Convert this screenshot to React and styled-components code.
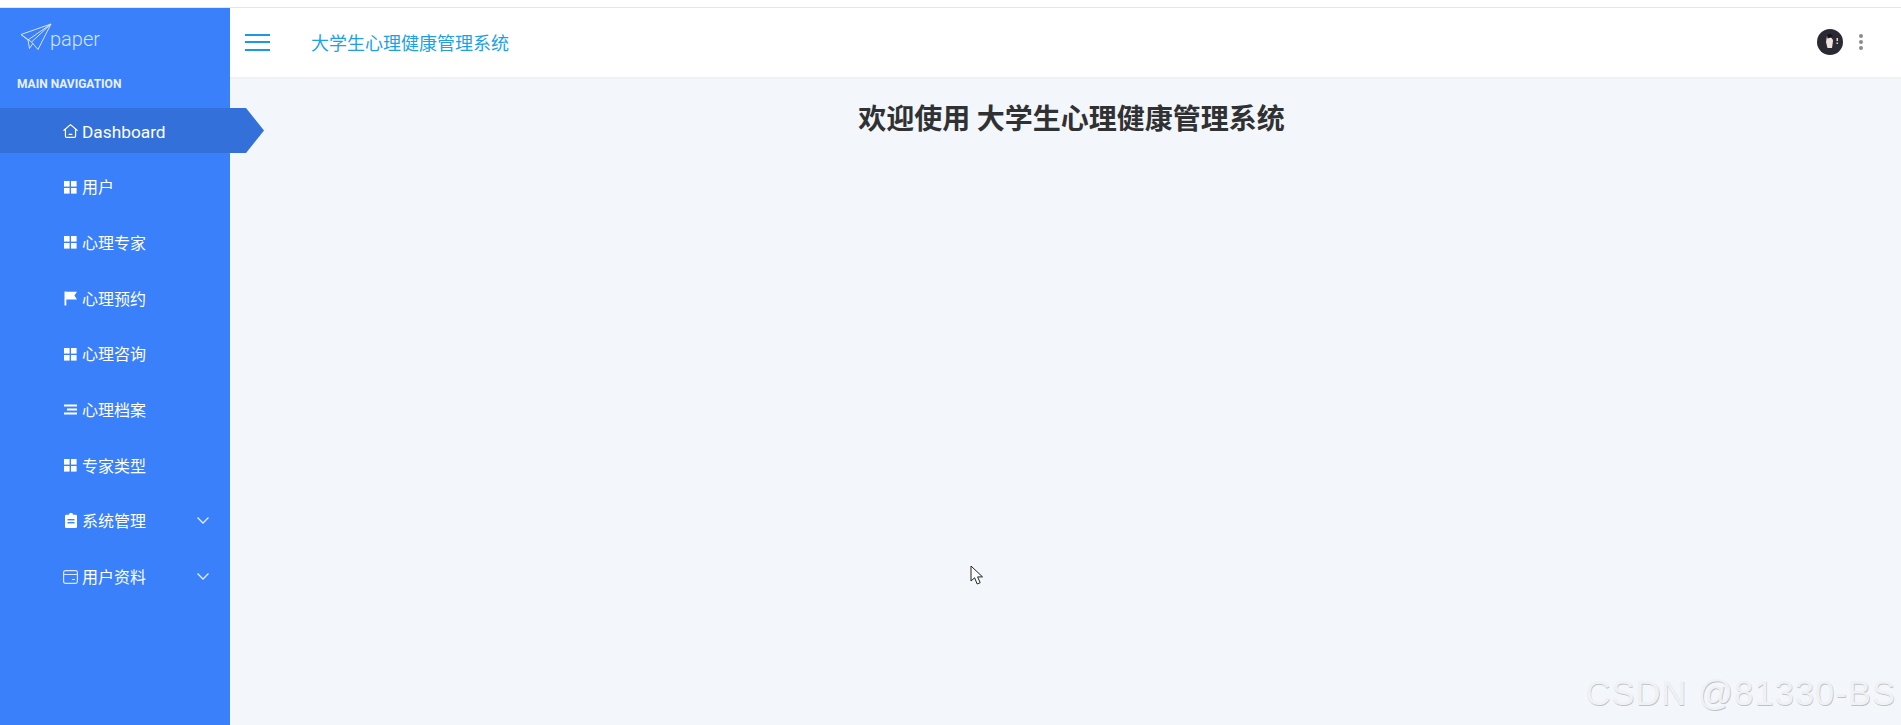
import React from "react";
import styled, { createGlobalStyle } from "styled-components";

const Global = createGlobalStyle`
  html, body { margin: 0; padding: 0; height: 100%; background: #f3f6fb; }
  #root { height: 100%; }
  * { box-sizing: border-box; }
`;

const Page = styled.div`
  position: relative;
  width: 1901px;
  height: 725px;
  display: flex;
  flex-direction: column;
  overflow: hidden;
  font-family: "Noto Sans", "Noto Sans CJK SC", sans-serif;
`;
const TopStrip = styled.div`
  height: 8px;
  flex: none;
  background: #fff;
  border-bottom: 1px solid #e4e6ea;
`;
const Body = styled.div`
  flex: 1;
  display: flex;
  min-height: 0;
`;
const Sidebar = styled.aside`
  width: 230px;
  flex: none;
  background: #3a80fb;
  display: flex;
  flex-direction: column;
  position: relative;
  z-index: 2;
`;
const Logo = styled.div`
  height: 48px;
  padding: 15px 0 0 19px;
  display: flex;
  align-items: flex-start;
  color: #d4e3fe;
  font-family: Roboto, sans-serif;
  font-weight: 300;
  font-size: 20px;
  line-height: 24px;
`;
const LogoText = styled.span`
  margin: 4px 0 0 -3px;
`;
const NavHeading = styled.div`
  height: 52px;
  padding: 20px 0 0 17px;
  color: #eaf1ff;
  font-family: Roboto, sans-serif;
  font-weight: 700;
  font-size: 12px;
  line-height: 16px;
`;
const Menu = styled.nav`
  display: flex;
  flex-direction: column;
  gap: 10.7px;
`;
const Item = styled.div`
  height: 45px;
  display: flex;
  align-items: center;
  padding-left: 63px;
  padding-right: 20px;
  color: #fff;
  width: ${(p) => (p.$active ? "264px" : "100%")};
  background: ${(p) => (p.$active ? "#3370da" : "transparent")};
  clip-path: ${(p) =>
    p.$active ? "polygon(0 0, 246px 0, 264px 50%, 246px 100%, 0 100%)" : "none"};
`;
const IconBox = styled.span`
  width: 15px;
  height: 15px;
  margin-right: 4px;
  flex: none;
  display: flex;
  align-items: center;
  justify-content: center;
  color: #fff;
`;
const Label = styled.span`
  flex: 1;
  white-space: nowrap;
  font-family: ${(p) =>
    p.$cjk ? '"Noto Sans CJK SC", sans-serif' : 'Roboto, sans-serif'};
  font-size: ${(p) => (p.$cjk ? "16px" : "17.3px")};
  line-height: 22px;
  padding-top: ${(p) => (p.$cjk ? "0" : "2px")};
`;
const Chevron = styled.svg`
  width: 14px;
  height: 9px;
  flex: none;
`;
const Main = styled.main`
  flex: 1;
  display: flex;
  flex-direction: column;
  min-width: 0;
`;
const Header = styled.header`
  height: 71px;
  flex: none;
  background: #fff;
  border-bottom: 2px solid #f0f1f4;
  display: flex;
  align-items: center;
  padding: 0 0 1px 15px;
`;
const Burger = styled.div`
  width: 25px;
  height: 17px;
  flex: none;
  display: flex;
  flex-direction: column;
  justify-content: space-between;
`;
const BurgerLine = styled.span`
  display: block;
  height: 2px;
  background: #1a9ae6;
`;
const SystemName = styled.div`
  margin-left: 41px;
  flex: 1;
  color: #1e9fe6;
  font-family: "Noto Sans CJK SC", sans-serif;
  font-size: 18px;
  line-height: 24px;
`;
const Tools = styled.div`
  display: flex;
  align-items: center;
  gap: 16px;
  padding-right: 38px;
`;
const Dots = styled.div`
  display: flex;
  flex-direction: column;
  gap: 2px;
`;
const Dot = styled.span`
  width: 4px;
  height: 4px;
  border-radius: 50%;
  background: #8b8b8b;
`;
const Content = styled.section`
  flex: 1;
  background: #f3f6fb;
  padding: 18px 0 0 12px;
`;
const Title = styled.h1`
  margin: 0;
  text-align: center;
  font-family: "Noto Sans CJK SC", sans-serif;
  font-weight: 700;
  font-size: 28px;
  line-height: 40px;
  color: #303133;
`;
const Watermark = styled.div`
  position: absolute;
  right: 5px;
  bottom: 12px;
  font-family: "Liberation Sans", sans-serif;
  font-size: 34.6px;
  line-height: 40px;
  letter-spacing: 1px;
  color: #f0f1f4;
  text-shadow: 0.6px 0.6px 0.4px #bfc2c6;
  white-space: nowrap;
  z-index: 3;
`;
const Cursor = styled.svg`
  position: absolute;
  left: 970px;
  top: 565px;
  width: 14px;
  height: 21px;
  z-index: 3;
`;

const GridIcon = () => (
  <svg width="13" height="13" viewBox="0 0 13 13" fill="currentColor" style={{ marginTop: 2 }}>
    <rect x="0" y="0" width="5.6" height="5.6" />
    <rect x="7" y="0" width="5.6" height="5.6" />
    <rect x="0" y="7" width="5.6" height="5.6" />
    <rect x="7" y="7" width="5.6" height="5.6" />
  </svg>
);
const HomeIcon = () => (
  <svg width="16" height="16" viewBox="0 0 16 16" fill="none" stroke="currentColor" strokeWidth="1.3" strokeLinejoin="round" strokeLinecap="round" style={{ marginTop: 1 }}>
    <path d="M1 7.2 8 1.2l7 6" />
    <path d="M2.600 6v7.600a1.200 1.200 0 0 0 1.200 1.200h8.400a1.200 1.200 0 0 0 1.200-1.200V6" />
    <path d="M6.600 11.600h2.800" />
  </svg>
);
const FlagIcon = () => (
  <svg width="13" height="15" viewBox="0 0 13 15" fill="currentColor" style={{ marginTop: 2 }}>
    <rect x="0.500" y="0.500" width="1.800" height="14" />
    <path d="M2 0.800h11l-2.600 3.600L13 8.400H2z" />
  </svg>
);
const ListIcon = () => (
  <svg width="13" height="11" viewBox="0 0 13 11" fill="currentColor" style={{ marginTop: 1 }}>
    <rect x="0" y="0.500" width="13" height="2" />
    <rect x="3" y="4.500" width="10" height="2" />
    <rect x="0" y="8.500" width="13" height="2" />
  </svg>
);
const ClipboardIcon = () => (
  <svg width="12" height="15" viewBox="0 0 12 15" style={{ marginTop: 1 }}>
    <path fill="currentColor" d="M1.200 1.800H4a2 2 0 0 1 4 0h2.800A1.200 1.200 0 0 1 12 3v10.800a1.200 1.200 0 0 1-1.200 1.200H1.200A1.200 1.200 0 0 1 0 13.800V3a1.200 1.200 0 0 1 1.200-1.200z" />
    <rect x="2.500" y="6" width="7" height="1.400" fill="#3a80fb" />
    <rect x="2.500" y="9" width="7" height="1.400" fill="#3a80fb" />
  </svg>
);
const CardIcon = () => (
  <svg width="15" height="14" viewBox="0 0 15 14" fill="none" stroke="#dbe7ff" strokeWidth="1.200" style={{ marginTop: 1 }}>
    <rect x="0.600" y="0.600" width="13.800" height="12.800" rx="1.800" />
    <path d="M0.600 4.500h13.800M9 9.500h3" />
  </svg>
);

const items = [
  { label: "Dashboard", icon: <HomeIcon />, active: true },
  { label: "用户", icon: <GridIcon />, cjk: true },
  { label: "心理专家", icon: <GridIcon />, cjk: true },
  { label: "心理预约", icon: <FlagIcon />, cjk: true },
  { label: "心理咨询", icon: <GridIcon />, cjk: true },
  { label: "心理档案", icon: <ListIcon />, cjk: true },
  { label: "专家类型", icon: <GridIcon />, cjk: true },
  { label: "系统管理", icon: <ClipboardIcon />, cjk: true, more: true },
  { label: "用户资料", icon: <CardIcon />, cjk: true, more: true },
];

export default function App() {
  return (
    <Page>
      <Global />
      <TopStrip />
      <Body>
        <Sidebar>
          <Logo>
            <svg width="34" height="28" viewBox="0 0 32 28" fill="none" stroke="#d4e3fe" strokeWidth="1" strokeLinejoin="round" style={{ flex: "none" }}>
              <path d="M1 11.500 31 1 18 26.500 11.500 19z" />
              <path d="M1 11.500 8 17 31 1" />
              <path d="M8 17 9.500 25.500 12.800 20.500" />
              <path d="M31 1 11.500 19" />
            </svg>
            <LogoText>paper</LogoText>
          </Logo>
          <NavHeading>MAIN NAVIGATION</NavHeading>
          <Menu>
            {items.map((it) => (
              <Item key={it.label} $active={it.active}>
                <IconBox>{it.icon}</IconBox>
                <Label $cjk={it.cjk}>{it.label}</Label>
                {it.more && (
                  <Chevron viewBox="0 0 14 9" fill="none" stroke="#e4edff" strokeWidth="1.300">
                    <path d="M1.500 1.500 7 7l5.500-5.500" />
                  </Chevron>
                )}
              </Item>
            ))}
          </Menu>
        </Sidebar>
        <Main>
          <Header>
            <Burger>
              <BurgerLine />
              <BurgerLine />
              <BurgerLine />
            </Burger>
            <SystemName>大学生心理健康管理系统</SystemName>
            <Tools>
              <svg width="26" height="26" viewBox="0 0 26 26">
                <circle cx="13" cy="13" r="13" fill="#2b2a33" />
                <path d="M10 7h5l1 5-1 7h-4.500L9 13z" fill="#efe3e0" />
                <path d="M10 6l3-1.500 2.500 2 .5 4-2-2-3.500 1z" fill="#15141a" />
                <rect x="19.500" y="9" width="1.500" height="3" fill="#d8d8d8" />
                <rect x="19.500" y="13.500" width="1.500" height="1.500" fill="#d8d8d8" />
              </svg>
              <Dots>
                <Dot />
                <Dot />
                <Dot />
              </Dots>
            </Tools>
          </Header>
          <Content>
            <Title>欢迎使用 大学生心理健康管理系统</Title>
          </Content>
        </Main>
      </Body>
      <Cursor viewBox="0 0 14 21">
        <path d="M1 1v15l3.600-3.200L7.200 19l3-1.300-2.600-5.800H12.500z" fill="#fff" stroke="#222" strokeWidth="1" strokeLinejoin="round" />
      </Cursor>
      <Watermark>CSDN @81330-BS</Watermark>
    </Page>
  );
}
